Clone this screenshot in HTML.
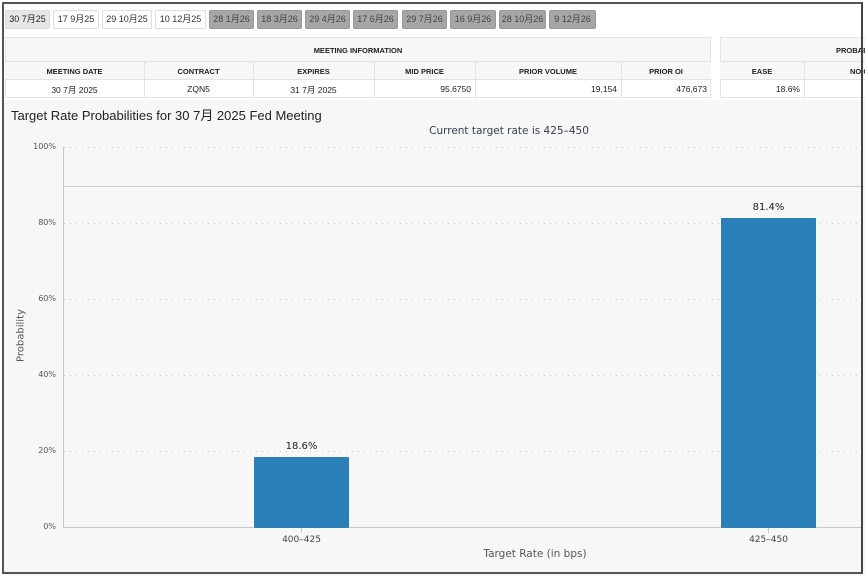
<!DOCTYPE html>
<html><head><meta charset="utf-8"><style>
*{margin:0;padding:0;box-sizing:border-box}
body{width:865px;height:575px;background:#fff;position:relative;overflow:hidden;font-family:"Liberation Sans","Noto Sans CJK SC",sans-serif}
.frame{position:absolute;left:2px;top:2px;width:861px;height:572px;border:2px solid #555;border-right-color:#444}
.a{position:absolute;white-space:nowrap}
.btn{position:absolute;top:10px;height:19px;font-size:9px;line-height:17px;text-align:center;border:1px solid #ddd;border-radius:2px;color:#333;background:#fff;white-space:nowrap}
.btn.g{background:#a6a6a6;border-color:#999;color:#444}
.btn.s{background:#e6e6e6;color:#222}
.t{position:absolute;font-size:7.5px;font-weight:bold;color:#222;text-align:center;white-space:nowrap}
.cell{position:absolute;font-size:8.5px;color:#222;white-space:nowrap}
.yl{position:absolute;font-size:8px;color:#555;left:16px;width:40px;text-align:right}
.grid{position:absolute;left:64px;width:800px;height:1px;background:repeating-linear-gradient(90deg,#ccc 0 1px,transparent 1px 6px)}
</style></head><body>
<div class="btn s" style="left:5px;width:45px">30 7月25</div>
<div class="btn" style="left:53px;width:46px">17 9月25</div>
<div class="btn" style="left:102px;width:50px">29 10月25</div>
<div class="btn" style="left:155px;width:51px">10 12月25</div>
<div class="btn g" style="left:209px;width:45px">28 1月26</div>
<div class="btn g" style="left:257px;width:45px">18 3月26</div>
<div class="btn g" style="left:305px;width:45px">29 4月26</div>
<div class="btn g" style="left:353px;width:45px">17 6月26</div>
<div class="btn g" style="left:402px;width:45px">29 7月26</div>
<div class="btn g" style="left:450px;width:46px">16 9月26</div>
<div class="btn g" style="left:499px;width:47px">28 10月26</div>
<div class="btn g" style="left:549px;width:47px">9 12月26</div>

<div class="a" style="left:5px;top:37px;width:706px;height:61px;border:1px solid #e3e3e3;background:#fff"></div>
<div class="a" style="left:5px;top:37px;width:706px;height:25px;background:#f7f7f7;border:1px solid #e3e3e3"></div>
<div class="a" style="left:5px;top:62px;width:706px;height:18px;background:#f7f7f7;border-bottom:1px solid #e3e3e3"></div>
<div class="t" style="left:5px;top:46px;width:706px">MEETING INFORMATION</div>
<div class="a" style="left:144px;top:62px;height:36px;border-left:1px solid #e3e3e3"></div>
<div class="a" style="left:253px;top:62px;height:36px;border-left:1px solid #e3e3e3"></div>
<div class="a" style="left:374px;top:62px;height:36px;border-left:1px solid #e3e3e3"></div>
<div class="a" style="left:475px;top:62px;height:36px;border-left:1px solid #e3e3e3"></div>
<div class="a" style="left:621px;top:62px;height:36px;border-left:1px solid #e3e3e3"></div>
<div class="t" style="left:5px;top:67px;width:139px">MEETING DATE</div>
<div class="t" style="left:144px;top:67px;width:109px">CONTRACT</div>
<div class="t" style="left:253px;top:67px;width:121px">EXPIRES</div>
<div class="t" style="left:374px;top:67px;width:101px">MID PRICE</div>
<div class="t" style="left:475px;top:67px;width:146px">PRIOR VOLUME</div>
<div class="t" style="left:621px;top:67px;width:90px">PRIOR OI</div>
<div class="cell" style="left:5px;top:84px;width:139px;text-align:center">30 7月 2025</div>
<div class="cell" style="left:144px;top:84px;width:109px;text-align:center">ZQN5</div>
<div class="cell" style="left:253px;top:84px;width:121px;text-align:center">31 7月 2025</div>
<div class="cell" style="left:374px;top:84px;width:97px;text-align:right">95.6750</div>
<div class="cell" style="left:475px;top:84px;width:142px;text-align:right">19,154</div>
<div class="cell" style="left:621px;top:84px;width:86px;text-align:right">476,673</div>

<div class="a" style="left:720px;top:37px;width:150px;height:61px;border:1px solid #e3e3e3;background:#fff"></div>
<div class="a" style="left:720px;top:37px;width:150px;height:25px;background:#f7f7f7;border:1px solid #e3e3e3"></div>
<div class="a" style="left:720px;top:62px;width:150px;height:18px;background:#f7f7f7;border-bottom:1px solid #e3e3e3"></div>
<div class="a" style="left:804px;top:62px;height:36px;border-left:1px solid #e3e3e3"></div>
<div class="t" style="left:836px;top:46px;text-align:left">PROBABILITY</div>
<div class="t" style="left:720px;top:67px;width:84px">EASE</div>
<div class="t" style="left:850px;top:67px;text-align:left">NO CHANGE</div>
<div class="cell" style="left:720px;top:84px;width:80px;text-align:right">18.6%</div>

<div class="a" style="left:4px;top:100px;width:861px;height:475px;background:#f7f7f7"></div>
<div class="a" style="left:11px;top:105px;font-size:13px;color:#222">Target Rate Probabilities for 30 7月 2025 Fed Meeting</div>
<div class="a" style="left:0;width:1018px;top:125px;text-align:center;font-size:10.5px;color:#333f4f;font-family:'DejaVu Sans',sans-serif">Current target rate is 425–450</div>
<div class="grid" style="top:147px"></div>
<div class="grid" style="top:223px"></div>
<div class="grid" style="top:299px"></div>
<div class="grid" style="top:375px"></div>
<div class="grid" style="top:451px"></div>
<div class="a" style="left:64px;top:186px;width:800px;border-top:1px solid #d0d0d0"></div>
<div class="a" style="left:63px;top:147px;height:381px;border-left:1px solid #c8c8c8"></div>
<div class="a" style="left:63px;top:527px;width:800px;border-top:1px solid #c8c8c8"></div>
<div class="yl" style="top:142px;font-family:'DejaVu Sans',sans-serif">100%</div>
<div class="yl" style="top:218px;font-family:'DejaVu Sans',sans-serif">80%</div>
<div class="yl" style="top:294px;font-family:'DejaVu Sans',sans-serif">60%</div>
<div class="yl" style="top:370px;font-family:'DejaVu Sans',sans-serif">40%</div>
<div class="yl" style="top:446px;font-family:'DejaVu Sans',sans-serif">20%</div>
<div class="yl" style="top:522px;font-family:'DejaVu Sans',sans-serif">0%</div>
<div class="a" style="left:-14px;top:330px;transform:rotate(-90deg);font-size:10px;color:#555;width:70px;text-align:center;font-family:'DejaVu Sans',sans-serif">Probability</div>
<div class="a" style="left:254px;top:457px;width:95px;height:71px;background:#2a7fb8;border-radius:1px"></div>
<div class="a" style="left:721px;top:218px;width:95px;height:310px;background:#2a7fb8;border-radius:1px"></div>
<div class="a" style="left:254px;top:441px;width:95px;text-align:center;font-size:10px;color:#222;font-family:'DejaVu Sans',sans-serif">18.6%</div>
<div class="a" style="left:721px;top:202px;width:95px;text-align:center;font-size:10px;color:#222;font-family:'DejaVu Sans',sans-serif">81.4%</div>
<div class="a" style="left:301px;top:528px;height:5px;border-left:1px solid #ccc"></div>
<div class="a" style="left:768px;top:528px;height:5px;border-left:1px solid #ccc"></div>
<div class="a" style="left:254px;top:535px;width:95px;text-align:center;font-size:9px;color:#444;font-family:'DejaVu Sans',sans-serif">400–425</div>
<div class="a" style="left:721px;top:535px;width:95px;text-align:center;font-size:9px;color:#444;font-family:'DejaVu Sans',sans-serif">425–450</div>
<div class="a" style="left:435px;top:548px;width:200px;text-align:center;font-size:10.5px;color:#555;font-family:'DejaVu Sans',sans-serif">Target Rate (in bps)</div>
<div class="frame"></div>
</body></html>
